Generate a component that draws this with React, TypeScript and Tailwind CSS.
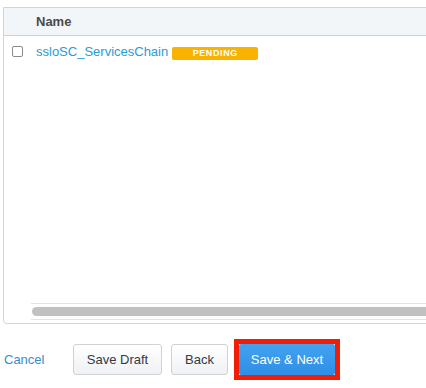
export default function App() {
  return (
    <div
      className="w-[426px] h-[388px] bg-white overflow-hidden relative"
      style={{ fontFamily: '"Liberation Sans", Arial, sans-serif' }}
    >
      {/* table panel, runs off the right edge */}
      <div className="ml-[3px] mt-[7px] w-[440px] h-[317px] border border-[#d4d4d4] rounded-bl-[4px] flex flex-col">
        <div className="h-[28px] bg-[#f3f6f9] border-b border-[#d0d0d0] flex items-center pl-[32px]">
          <span className="text-[13px] font-bold text-[#4a4a4a]">Name</span>
        </div>
        <div className="flex items-center h-[32px] pl-[8px]">
          <span className="w-[11px] h-[11px] border border-[#8a8a8a] rounded-[2px] bg-white mr-[13px] -mt-[2px]" />
          <span className="text-[13px] text-[#2b9ad8]">ssloSC_ServicesChain</span>
          <span className="ml-[4px] mt-[3px] w-[86px] h-[13px] rounded-[2px] bg-[#f8b200] text-white text-[9px] font-bold tracking-[0.6px] flex items-center justify-center">
            PENDING
          </span>
        </div>
        <div className="flex-1" />
        <div className="ml-[27px] mb-[3px] h-[17px] border-t border-b border-[#e2e2e2] flex items-center">
          <div className="h-[9px] w-full bg-[#c1c1c1] rounded-l-[5px] ml-[1px]" />
        </div>
      </div>

      <div className="flex items-center mt-[15px]">
        <span className="ml-[4px] w-[69px] text-[13px] text-[#3a8bcd]">Cancel</span>
        <button className="w-[89px] h-[31px] border border-[#cfd3d8] rounded-[3px] bg-gradient-to-b from-white to-[#eff1f4] text-[13px] text-[#333a45]">
          Save Draft
        </button>
        <button className="ml-[9px] w-[57px] h-[31px] border border-[#cfd3d8] rounded-[3px] bg-gradient-to-b from-white to-[#eff1f4] text-[13px] text-[#333a45]">
          Back
        </button>
        <div className="ml-[6px] border-[5px] border-[#f21d06] p-0">
          <button className="w-[96px] h-[31px] rounded-[2px] bg-gradient-to-b from-[#42a2f0] to-[#2f8ee6] text-[13px] text-white">
            Save &amp; Next
          </button>
        </div>
      </div>
    </div>
  );
}
